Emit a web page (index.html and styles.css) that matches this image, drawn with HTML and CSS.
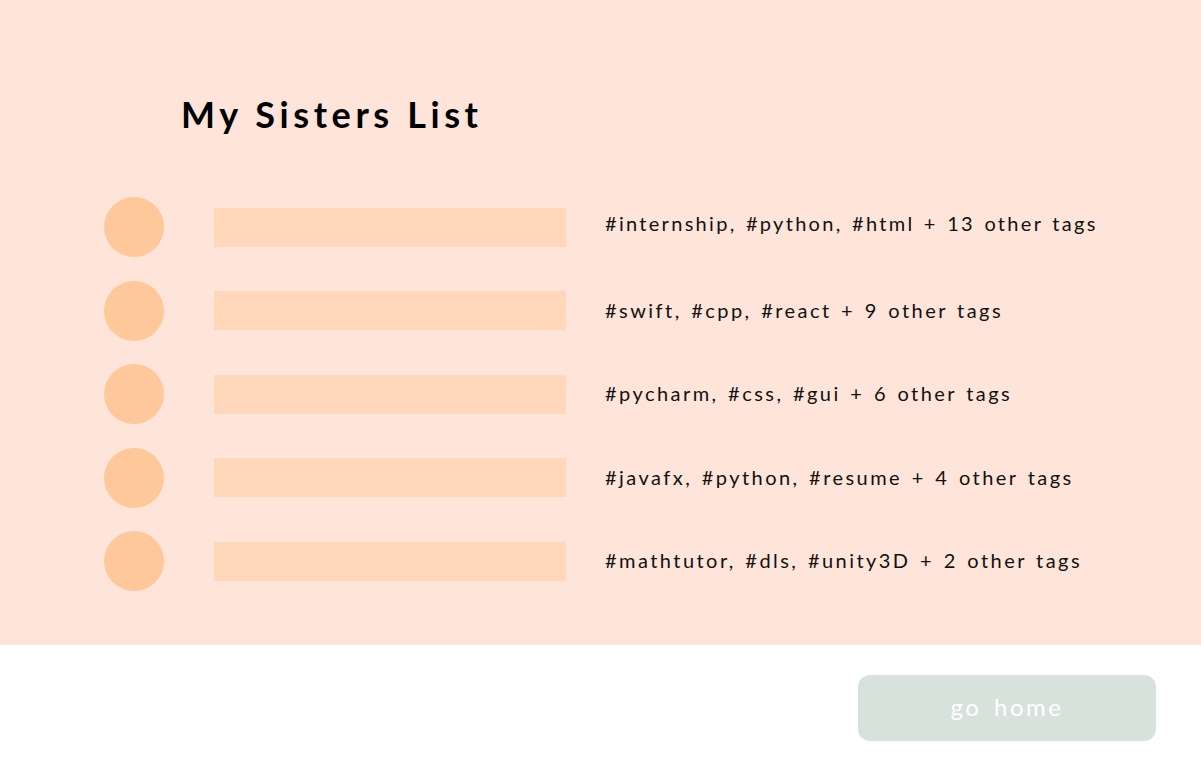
FILE: index.html
```html
<!DOCTYPE html>
<html lang="en">
<head>
<meta charset="utf-8">
<title>My Sisters List</title>
<link rel="stylesheet" href="styles.css">
</head>
<body>
<main class="panel">
  <h1 class="title">My Sisters List</h1>
  <ul class="list">
    <li class="row"><span class="avatar"></span><span class="bar"></span><span class="tags">#internship, #python, #html + 13 other tags</span></li>
    <li class="row"><span class="avatar"></span><span class="bar"></span><span class="tags">#swift, #cpp, #react + 9 other tags</span></li>
    <li class="row"><span class="avatar"></span><span class="bar"></span><span class="tags">#pycharm, #css, #gui + 6 other tags</span></li>
    <li class="row"><span class="avatar"></span><span class="bar"></span><span class="tags">#javafx, #python, #resume + 4 other tags</span></li>
    <li class="row"><span class="avatar"></span><span class="bar"></span><span class="tags">#mathtutor, #dls, #unity3D + 2 other tags</span></li>
  </ul>
</main>
<footer class="footer">
  <button class="home-btn" type="button">go home</button>
</footer>
</body>
</html>
```

FILE: styles.css
```css
html, body {
  margin: 0;
  padding: 0;
  background: #ffffff;
  font-family: "Lato", "DejaVu Sans", sans-serif;
}

.panel {
  background: #ffe5d9;
  height: 645px;
  box-sizing: border-box;
  padding: 88px 0 0 104px;
}

.title {
  margin: 0 0 0 77px;
  font-size: 36px;
  font-weight: 700;
  letter-spacing: 4.6px;
  line-height: 52px;
  color: #000;
}

.list {
  list-style: none;
  margin: 57px 0 0 0;
  padding: 0;
  display: flex;
  flex-direction: column;
  gap: 23.5px;
}

.row {
  display: flex;
  align-items: center;
  height: 60px;
}

.avatar {
  width: 60px;
  height: 60px;
  border-radius: 50%;
  background: #fec89a;
  flex: none;
}

.bar {
  width: 352px;
  height: 39px;
  background: #ffd7ba;
  margin-left: 50px;
  margin-right: 39px;
  flex: none;
}

.tags {
  font-size: 20px;
  letter-spacing: 2.45px;
  word-spacing: 2px;
  color: #111;
  padding-bottom: 2px;
}

.row:first-child .tags {
  letter-spacing: 2.3px;
  padding-bottom: 8px;
}

.footer {
  height: 128px;
  display: flex;
  justify-content: flex-end;
  align-items: flex-start;
  padding: 30px 45px 0 0;
  box-sizing: border-box;
}

.home-btn {
  width: 298px;
  height: 66px;
  border: none;
  border-radius: 12px;
  background: #d8e2dc;
  color: #ffffff;
  font-family: "Lato", "DejaVu Sans", sans-serif;
  font-size: 24px;
  letter-spacing: 2.5px;
  word-spacing: 4px;
  padding-bottom: 4px;
  cursor: pointer;
}
```
